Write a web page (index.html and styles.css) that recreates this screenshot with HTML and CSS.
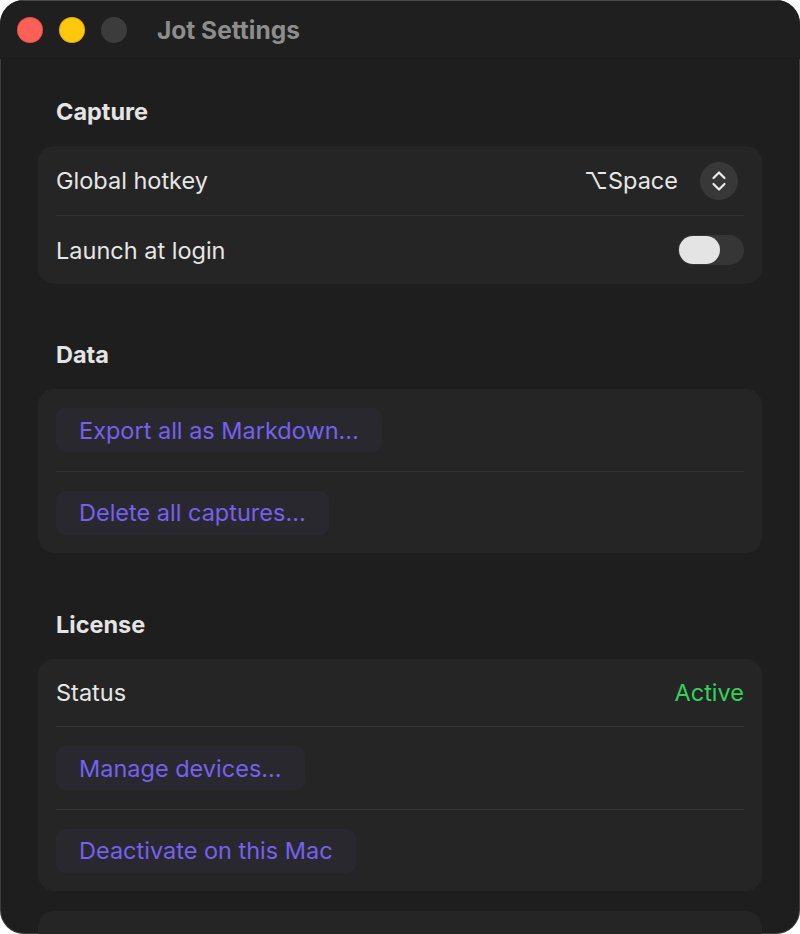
FILE: index.html
```html
<!DOCTYPE html>
<html>
<head>
<meta charset="utf-8">
<link rel="stylesheet" href="styles.css">
</head>
<body>
<div class="window">
  <header class="titlebar">
    <div class="lights">
      <span class="light red"></span>
      <span class="light yellow"></span>
      <span class="light gray"></span>
    </div>
    <div class="title">Jot Settings</div>
  </header>
  <main class="content">
    <section class="section">
      <h2 class="section-title">Capture</h2>
      <div class="card">
        <div class="row">
          <span class="label">Global hotkey</span>
          <div class="hotkey">
            <span class="hotkey-text">⌥Space</span>
            <span class="stepper">
              <svg width="16" height="24" viewBox="0 0 16 24"><path d="M2.5 9 L8 3.5 L13.5 9" fill="none" stroke="#ececec" stroke-width="2.2" stroke-linecap="round" stroke-linejoin="round"/><path d="M2.5 15 L8 20.5 L13.5 15" fill="none" stroke="#ececec" stroke-width="2.2" stroke-linecap="round" stroke-linejoin="round"/></svg>
            </span>
          </div>
        </div>
        <div class="row">
          <span class="label">Launch at login</span>
          <span class="toggle"><span class="knob"></span></span>
        </div>
      </div>
    </section>
    <section class="section">
      <h2 class="section-title">Data</h2>
      <div class="card">
        <div class="row btn-row"><button class="link-btn">Export all as Markdown…</button></div>
        <div class="row btn-row"><button class="link-btn">Delete all captures…</button></div>
      </div>
    </section>
    <section class="section license-section">
      <h2 class="section-title">License</h2>
      <div class="card">
        <div class="row status-row">
          <span class="label">Status</span>
          <span class="active">Active</span>
        </div>
        <div class="row btn-row"><button class="link-btn">Manage devices…</button></div>
        <div class="row btn-row"><button class="link-btn">Deactivate on this Mac</button></div>
      </div>
    </section>
    <section class="section tail-section">
      <div class="card tail"></div>
    </section>
  </main>
</div>
</body>
</html>
```
FILE: styles.css
```css
* { box-sizing: border-box; }
html, body {
  margin: 0;
  padding: 0;
  background: #ffffff;
  width: 800px;
  height: 934px;
  overflow: hidden;
}
body {
  font-family: "Inter", "Liberation Sans", sans-serif;
  -webkit-font-smoothing: antialiased;
}
.window {
  width: 800px;
  height: 934px;
  background: #1e1e1e;
  border-radius: 24px;
  overflow: hidden;
  box-shadow: inset 0 0 0 1px rgba(255,255,255,0.14);
  display: flex;
  flex-direction: column;
}
.titlebar {
  height: 59px;
  flex: none;
  display: flex;
  align-items: center;
  padding: 0 0 0 17px;
  background: #1f1f1f;
  border-bottom: 1px solid #1b1b1b;
  border-top: 1px solid #4a4a4a;
}
.lights {
  display: flex;
  gap: 16px;
}
.light {
  width: 26px;
  height: 26px;
  border-radius: 50%;
  display: block;
}
.red { background: #fe5f57; box-shadow: inset 0 0 0 1px rgba(0,0,0,0.12); }
.yellow { background: #fec80c; box-shadow: inset 0 0 0 1px rgba(0,0,0,0.12); }
.gray { background: #3c3c3c; }
.title {
  margin-left: 30px;
  color: #8d8d8d;
  font-weight: 700;
  font-size: 24.5px;
  letter-spacing: 0;
}
.content {
  padding: 40px 38px 0 38px;
  display: flex;
  flex-direction: column;
}
.section + .section {
  margin-top: 58px;
}
.section.license-section {
  margin-top: 59px;
}
.section.tail-section {
  margin-top: 20px;
}
.section-title {
  margin: 0 0 21px 18px;
  font-size: 23.5px;
  font-weight: 700;
  color: #e4e4e4;
  line-height: 26px;
}
.card {
  background: #252525;
  border-radius: 16px;
  padding: 0 18px;
}
.row {
  display: flex;
  align-items: center;
  justify-content: space-between;
  height: 69px;
}
.row + .row {
  border-top: 1px solid #333333;
}
.label {
  color: #e6e6e6;
  font-size: 23.5px;
}
.hotkey {
  display: flex;
  align-items: center;
  gap: 22px;
  margin-right: 6px;
}
.hotkey-text {
  color: #e6e6e6;
  font-size: 23.5px;
}
.stepper {
  width: 38px;
  height: 38px;
  border-radius: 50%;
  background: #383838;
  display: flex;
  align-items: center;
  justify-content: center;
}
.toggle {
  width: 66px;
  height: 30px;
  border-radius: 15px;
  background: #363636;
  display: flex;
  align-items: center;
  padding: 1px;
}
.knob {
  width: 41px;
  height: 28px;
  border-radius: 14px;
  background: #e4e4e4;
  display: block;
}
.btn-row {
  height: 82px;
}
.status-row { height: 67px; }
.status-row + .btn-row { height: 83px; }
.link-btn {
  border: none;
  background: #29282e;
  color: #7561ee;
  font-family: inherit;
  font-size: 23.5px;
  height: 44px;
  padding: 0 23px;
  border-radius: 9px;
  cursor: pointer;
}
.active {
  color: #32d25a;
  font-size: 23.5px;
}
.tail {
  height: 60px;
}
```
